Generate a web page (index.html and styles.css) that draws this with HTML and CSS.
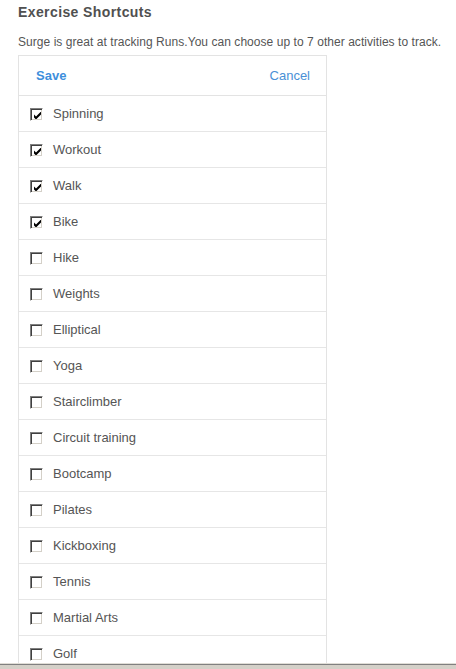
FILE: index.html
```html
<!DOCTYPE html>
<html>
<head>
<meta charset="utf-8">
<link rel="stylesheet" href="styles.css">
</head>
<body>
<div class="page">
  <h1 class="title">Exercise Shortcuts</h1>
  <p class="intro">Surge is great at tracking Runs.You can choose up to 7 other activities to track.</p>
  <div class="panel">
    <div class="panel-head">
      <span class="save">Save</span>
      <span class="cancel">Cancel</span>
    </div>
    <ul class="list">
      <li class="row"><span class="cb"><svg viewBox="0 0 7 7" width="7" height="7"><path d="M0 2.5 L2 4.5 L7 -0.5 L7 2.5 L2 7.5 L0 5.5 Z" fill="#000"/></svg></span><span class="label">Spinning</span></li>
      <li class="row"><span class="cb"><svg viewBox="0 0 7 7" width="7" height="7"><path d="M0 2.5 L2 4.5 L7 -0.5 L7 2.5 L2 7.5 L0 5.5 Z" fill="#000"/></svg></span><span class="label">Workout</span></li>
      <li class="row"><span class="cb"><svg viewBox="0 0 7 7" width="7" height="7"><path d="M0 2.5 L2 4.5 L7 -0.5 L7 2.5 L2 7.5 L0 5.5 Z" fill="#000"/></svg></span><span class="label">Walk</span></li>
      <li class="row"><span class="cb"><svg viewBox="0 0 7 7" width="7" height="7"><path d="M0 2.5 L2 4.5 L7 -0.5 L7 2.5 L2 7.5 L0 5.5 Z" fill="#000"/></svg></span><span class="label">Bike</span></li>
      <li class="row"><span class="cb"></span><span class="label">Hike</span></li>
      <li class="row"><span class="cb"></span><span class="label">Weights</span></li>
      <li class="row"><span class="cb"></span><span class="label">Elliptical</span></li>
      <li class="row"><span class="cb"></span><span class="label">Yoga</span></li>
      <li class="row"><span class="cb"></span><span class="label">Stairclimber</span></li>
      <li class="row"><span class="cb"></span><span class="label">Circuit training</span></li>
      <li class="row"><span class="cb"></span><span class="label">Bootcamp</span></li>
      <li class="row"><span class="cb"></span><span class="label">Pilates</span></li>
      <li class="row"><span class="cb"></span><span class="label">Kickboxing</span></li>
      <li class="row"><span class="cb"></span><span class="label">Tennis</span></li>
      <li class="row"><span class="cb"></span><span class="label">Martial Arts</span></li>
      <li class="row"><span class="cb"></span><span class="label">Golf</span></li>
    </ul>
  </div>
</div>
<div class="winbar"></div>
</body>
</html>
```
FILE: styles.css
```css
html, body {
  margin: 0;
  padding: 0;
  background: #fff;
  overflow: hidden;
}
body {
  font-family: "Liberation Sans", Arial, sans-serif;
  color: #555;
}
.page {
  padding: 4px 0 0 18px;
}
.title {
  margin: 0;
  font-size: 14px;
  font-weight: bold;
  letter-spacing: 0.4px;
  line-height: 16px;
  color: #505050;
}
.intro {
  margin: 14px 0 0;
  font-size: 12px;
  line-height: 16px;
  letter-spacing: 0.05px;
  color: #555;
}
.panel {
  margin-top: 5px;
  width: 307px;
  border: 1px solid #e3e3e3;
  border-bottom: none;
}
.panel-head {
  display: flex;
  justify-content: space-between;
  align-items: center;
  height: 38px;
  padding: 0 16px 1px 17px;
  border-bottom: 1px solid #e3e3e3;
  font-size: 13px;
}
.save {
  color: #3d8fdc;
  font-weight: bold;
}
.cancel {
  color: #4a90d6;
}
.list {
  list-style: none;
  margin: 0;
  padding: 0;
}
.row {
  display: flex;
  align-items: center;
  height: 35px;
  padding-left: 11px;
  border-bottom: 1px solid #e6e6e6;
  font-size: 13px;
  color: #555;
}
.cb {
  box-sizing: border-box;
  width: 13px;
  height: 13px;
  border: 1px solid;
  border-color: #808080 #fff #fff #808080;
  box-shadow: inset 1px 1px 0 #404040, inset -1px -1px 0 #d4d0c8;
  background: #fff;
  display: flex;
  align-items: center;
  justify-content: center;
  margin-top: 2px;
  padding: 1px 0 0 1px;
}
.cb svg {
  display: block;
}
.label {
  margin-left: 10px;
}
.winbar {
  position: fixed;
  left: 0;
  right: 0;
  bottom: 0;
  height: 4px;
  background: #d4d0c8;
  border-top: 1px solid #808080;
  box-shadow: 0 -1px 0 #e0ddd6;
}
```
